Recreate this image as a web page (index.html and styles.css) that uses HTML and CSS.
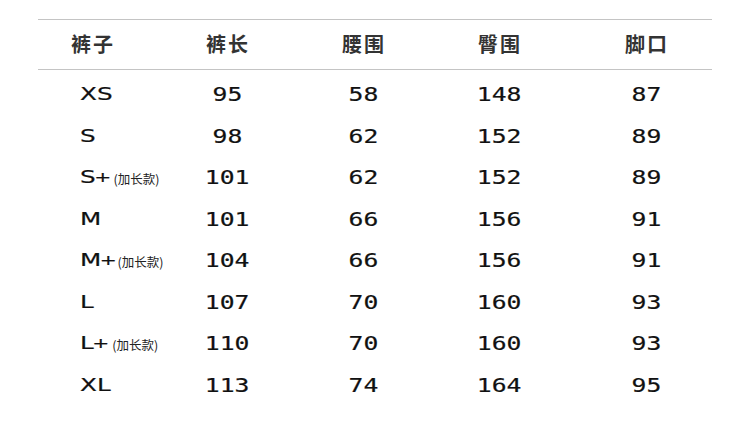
FILE: index.html
```html
<!DOCTYPE html>
<html lang="zh">
<head>
<meta charset="utf-8">
<link rel="stylesheet" href="styles.css">
</head>
<body>
<div class="table">
  <div class="row head">
    <div class="c c1"><span>裤子</span></div>
    <div class="c c2"><span>裤长</span></div>
    <div class="c c3"><span>腰围</span></div>
    <div class="c c4"><span>臀围</span></div>
    <div class="c c5"><span>脚口</span></div>
  </div>
  <div class="body">
    <div class="row"><div class="c c1"><span class="sz">XS</span></div><div class="c c2"><span class="n">95</span></div><div class="c c3"><span class="n">58</span></div><div class="c c4"><span class="n">148</span></div><div class="c c5"><span class="n">87</span></div></div>
    <div class="row"><div class="c c1"><span class="sz">S</span></div><div class="c c2"><span class="n">98</span></div><div class="c c3"><span class="n">62</span></div><div class="c c4"><span class="n">152</span></div><div class="c c5"><span class="n">89</span></div></div>
    <div class="row"><div class="c c1"><span class="sz">S<small class="plus">+</small></span><span class="note">(加长款)</span></div><div class="c c2"><span class="n">101</span></div><div class="c c3"><span class="n">62</span></div><div class="c c4"><span class="n">152</span></div><div class="c c5"><span class="n">89</span></div></div>
    <div class="row"><div class="c c1"><span class="sz">M</span></div><div class="c c2"><span class="n">101</span></div><div class="c c3"><span class="n">66</span></div><div class="c c4"><span class="n">156</span></div><div class="c c5"><span class="n">91</span></div></div>
    <div class="row"><div class="c c1"><span class="sz">M<small class="plus">+</small></span><span class="note">(加长款)</span></div><div class="c c2"><span class="n">104</span></div><div class="c c3"><span class="n">66</span></div><div class="c c4"><span class="n">156</span></div><div class="c c5"><span class="n">91</span></div></div>
    <div class="row"><div class="c c1"><span class="sz">L</span></div><div class="c c2"><span class="n">107</span></div><div class="c c3"><span class="n">70</span></div><div class="c c4"><span class="n">160</span></div><div class="c c5"><span class="n">93</span></div></div>
    <div class="row"><div class="c c1"><span class="sz">L<small class="plus">+</small></span><span class="note">(加长款)</span></div><div class="c c2"><span class="n">110</span></div><div class="c c3"><span class="n">70</span></div><div class="c c4"><span class="n">160</span></div><div class="c c5"><span class="n">93</span></div></div>
    <div class="row"><div class="c c1"><span class="sz">XL</span></div><div class="c c2"><span class="n">113</span></div><div class="c c3"><span class="n">74</span></div><div class="c c4"><span class="n">164</span></div><div class="c c5"><span class="n">95</span></div></div>
  </div>
</div>
</body>
</html>
```
FILE: styles.css
```css
html, body {
  margin: 0;
  padding: 0;
  background: #ffffff;
}
body {
  width: 750px;
  height: 433px;
  overflow: hidden;
  font-family: "DejaVu Sans", "Noto Sans CJK SC", sans-serif;
  color: #111;
}
.table {
  margin: 19px 0 0 38px;
  width: 674px;
}
.row {
  display: grid;
  grid-template-columns: 108px 162px 110px 162px 132px;
  align-items: center;
  height: 41.5px;
}
.head {
  height: 49px;
  border-top: 1px solid #c4c4c4;
  border-bottom: 1px solid #c4c4c4;
}
.head .c {
  justify-content: center;
  font-family: "Noto Sans CJK SC", sans-serif;
  font-weight: 700;
  font-size: 20px;
  letter-spacing: 2px;
  color: #333;
}
.head .c span {
  margin-right: -2px;
  position: relative;
  top: -1px;
}
.body {
  padding-top: 4px;
}
.c {
  display: flex;
  justify-content: center;
  align-items: center;
  white-space: nowrap;
}
.body .c1 {
  justify-content: flex-start;
  padding-left: 42px;
}
.n {
  display: inline-block;
  font-family: "DejaVu Sans Mono", monospace;
  font-size: 19px;
  transform: scaleX(1.3);
  transform-origin: center;
  line-height: 1;
  -webkit-text-stroke: 0.2px #111;
}
.sz {
  display: inline-block;
  font-size: 17px;
  line-height: 1;
  transform: scaleX(1.45);
  transform-origin: left center;
  -webkit-text-stroke: 0.2px #111;
}
.plus {
  font-size: 14px;
  margin-left: -1px;
  position: relative;
  top: -1px;
}
.note {
  font-family: "Noto Sans CJK SC", sans-serif;
  font-size: 12.5px;
  color: #222;
  margin-left: 12px;
  position: relative;
  top: 1px;
}
```
